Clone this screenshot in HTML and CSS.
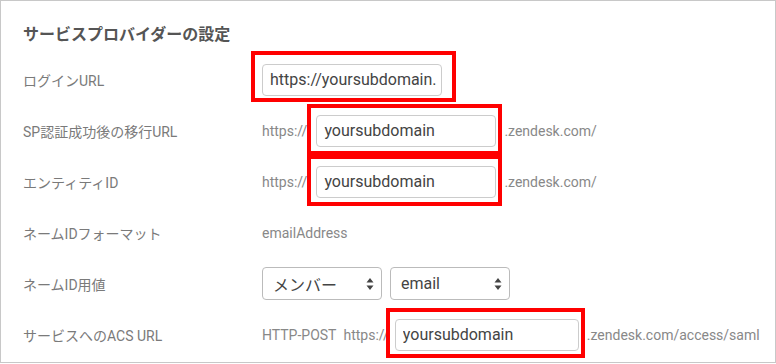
FILE: index.html
```html
<!DOCTYPE html>
<html lang="ja">
<head>
<meta charset="utf-8">
<title>サービスプロバイダーの設定</title>
<link rel="stylesheet" href="styles.css">
</head>
<body>
<section class="panel">
  <h2 class="title">サービスプロバイダーの設定</h2>
  <div class="row">
    <div class="label">ログインURL</div>
    <div class="value">
      <span class="hl hl-1"><input class="field field-url" type="text" value="https://yoursubdomain." readonly></span>
    </div>
  </div>
  <div class="row">
    <div class="label">SP認証成功後の移行URL</div>
    <div class="value">
      <span class="text">https://</span>
      <span class="hl hl-2"><input class="field" type="text" value="yoursubdomain" readonly></span>
      <span class="text suffix">.zendesk.com/</span>
    </div>
  </div>
  <div class="row">
    <div class="label">エンティティID</div>
    <div class="value">
      <span class="text">https://</span>
      <span class="hl hl-2"><input class="field" type="text" value="yoursubdomain" readonly></span>
      <span class="text suffix">.zendesk.com/</span>
    </div>
  </div>
  <div class="row">
    <div class="label">ネームIDフォーマット</div>
    <div class="value">
      <span class="text">emailAddress</span>
    </div>
  </div>
  <div class="row">
    <div class="label">ネームID用値</div>
    <div class="value">
      <div class="select">
        <span class="select-text">メンバー</span>
        <svg class="arrows" width="8" height="14" viewBox="0 0 8 14"><path d="M4 1 L7.5 5.5 H0.5 Z M4 13 L7.5 8.5 H0.5 Z" fill="#444"/></svg>
      </div>
      <div class="select">
        <span class="select-text">email</span>
        <svg class="arrows" width="8" height="14" viewBox="0 0 8 14"><path d="M4 1 L7.5 5.5 H0.5 Z M4 13 L7.5 8.5 H0.5 Z" fill="#444"/></svg>
      </div>
    </div>
  </div>
  <div class="row">
    <div class="label">サービスへのACS URL</div>
    <div class="value">
      <span class="text">HTTP-POST</span>
      <span class="text proto">https://</span>
      <span class="hl hl-3"><input class="field field-wide" type="text" value="yoursubdomain" readonly></span>
      <span class="text suffix">.zendesk.com/access/saml</span>
    </div>
  </div>
</section>
</body>
</html>
```

FILE: styles.css
```css
html, body {
  margin: 0;
  padding: 0;
  background: #fff;
}

body {
  font-family: Roboto, "Noto Sans CJK JP", sans-serif;
  width: 776px;
  height: 364px;
  overflow: hidden;
}

.panel {
  box-sizing: border-box;
  width: 776px;
  height: 363px;
  border: 1px solid #c8c8c8;
  padding: 24px 0 0 22px;
}

.title {
  margin: 0 0 9px;
  font-size: 16px;
  line-height: 20px;
  font-weight: 700;
  color: #555;
}

.row {
  display: grid;
  grid-template-columns: 239px 1fr;
  align-items: center;
  height: 51px;
}

.label {
  font-size: 14px;
  color: #7a7a7a;
}

.value {
  display: flex;
  align-items: center;
}

.text {
  font-size: 14px;
  color: #888;
}

.suffix {
  margin-left: 8px;
}

.proto {
  margin-left: 7px;
}

.hl {
  position: relative;
  display: inline-flex;
  margin-left: 9px;
}

.hl::after {
  content: "";
  position: absolute;
  border: 4px solid #f00;
  pointer-events: none;
}

.hl-1 {
  margin-left: 0;
}

.hl-1::after {
  top: -13px;
  left: -11px;
  right: -14px;
  bottom: -6px;
}

.hl-2::after {
  top: -11px;
  left: -9px;
  right: -6px;
  bottom: -8px;
}

.hl-3 {
  margin-left: 6px;
}

.hl-3::after {
  top: -11px;
  left: -9px;
  right: -6px;
  bottom: -7px;
}

.field {
  box-sizing: border-box;
  width: 180px;
  height: 32px;
  border: 1px solid #ccc;
  border-radius: 4px;
  padding: 0 8px 0 7px;
  font-family: Roboto, "Noto Sans CJK JP", sans-serif;
  font-size: 16px;
  color: #444;
  background: #fff;
  outline: none;
}

.field-url {
  padding: 0 3px 0 7px;
}

.field-wide {
  width: 184px;
}

.select {
  box-sizing: border-box;
  width: 120px;
  height: 33px;
  border: 1px solid #bbb;
  border-radius: 4px;
  display: flex;
  align-items: center;
  justify-content: space-between;
  padding: 0 7px 0 10px;
  margin-right: 8px;
  background: #fff;
}

.select-text {
  font-size: 16px;
  color: #444;
}

.arrows {
  display: block;
}
```
